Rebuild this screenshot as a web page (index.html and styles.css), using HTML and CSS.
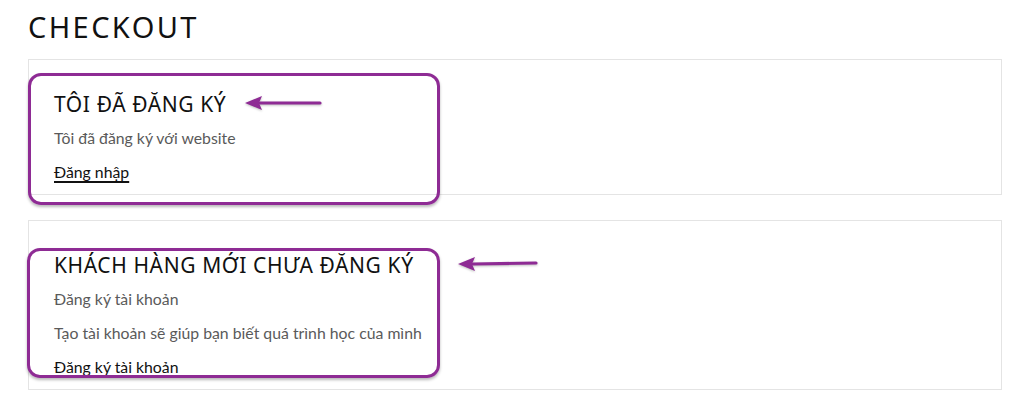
FILE: index.html
```html
<!DOCTYPE html>
<html lang="vi">
<head>
<meta charset="utf-8">
<title>Checkout</title>
<link rel="stylesheet" href="styles.css">
</head>
<body>
<main class="page">
  <h1 class="page-title">CHECKOUT</h1>
  <section class="panel">
    <h2 class="panel-title">TÔI ĐÃ ĐĂNG KÝ</h2>
    <p class="panel-text">Tôi đã đăng ký với website</p>
    <p class="panel-text"><a class="panel-link" href="#">Đăng nhập</a></p>
  </section>
  <section class="panel">
    <h2 class="panel-title">KHÁCH HÀNG MỚI CHƯA ĐĂNG KÝ</h2>
    <p class="panel-text">Đăng ký tài khoản</p>
    <p class="panel-text">Tạo tài khoản sẽ giúp bạn biết quá trình học của mình</p>
    <p class="panel-text"><a class="panel-link" href="#">Đăng ký tài khoản</a></p>
  </section>

  <div class="mark mark-one"></div>
  <div class="mark mark-two"></div>
  <svg class="arrow arrow-one" width="80" height="20" viewBox="0 0 80 20">
    <path d="M16 10 H76" stroke="#8e2b94" stroke-width="3.2" stroke-linecap="round" fill="none"/>
    <path d="M1 10 L18 3 L15 10 L18 17 Z" fill="#8e2b94"/>
  </svg>
  <svg class="arrow arrow-two" width="82" height="20" viewBox="0 0 82 20">
    <path d="M16 10 L79 9" stroke="#8e2b94" stroke-width="3.2" stroke-linecap="round" fill="none"/>
    <path d="M1 10 L18 3 L15 10 L18 17 Z" fill="#8e2b94"/>
  </svg>
</main>
</body>
</html>
```

FILE: styles.css
```css
html, body {
  margin: 0;
  padding: 0;
  background: #ffffff;
}

.page {
  position: relative;
  width: 1024px;
  height: 415px;
  padding: 0 22px 0 28px;
  box-sizing: border-box;
  display: flex;
  flex-direction: column;
  font-family: "Lato", "Liberation Sans", sans-serif;
}

.page-title {
  margin: 0;
  height: 59px;
  line-height: 54px;
  font-family: "Noto Sans", "Liberation Sans", sans-serif;
  font-weight: 400;
  font-size: 29px;
  letter-spacing: 2.4px;
  color: #111111;
}

.panel {
  border: 1px solid #e4e4e4;
  padding: 27px 25px 5px 25px;
  display: flex;
  flex-direction: column;
}

.panel + .panel {
  margin-top: 25px;
}

.panel-title {
  margin: 0;
  line-height: 34px;
  font-family: "Noto Sans", "Liberation Sans", sans-serif;
  font-weight: 400;
  font-size: 21px;
  letter-spacing: 0.6px;
  color: #111111;
}

.panel-text {
  margin: 0;
  line-height: 34px;
  font-size: 15.8px;
  color: #5a5a5a;
}

.panel-link {
  color: #111111;
  text-decoration: underline;
  text-decoration-thickness: 1.5px;
  text-underline-offset: 3px;
}

.mark {
  position: absolute;
  border: 3px solid #8e2b94;
  border-radius: 13px;
  box-shadow: 0 2px 3px rgba(0, 0, 0, 0.28);
  box-sizing: border-box;
}

.mark-one {
  left: 28px;
  top: 73px;
  width: 412px;
  height: 132px;
}

.mark-two {
  left: 27px;
  top: 248px;
  width: 413px;
  height: 130px;
}

.arrow {
  position: absolute;
  filter: drop-shadow(0 1px 1px rgba(0, 0, 0, 0.25));
}

.arrow-one {
  left: 244px;
  top: 93px;
}

.arrow-two {
  left: 457px;
  top: 254px;
}
```
